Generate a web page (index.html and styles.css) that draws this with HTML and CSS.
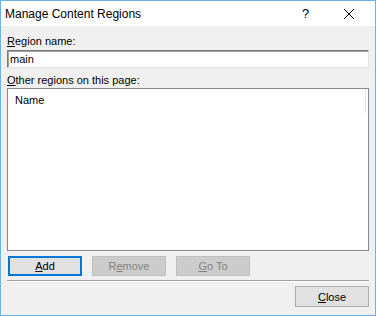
FILE: index.html
```html
<!DOCTYPE html>
<html lang="en">
<head>
    <meta charset="UTF-8">
    <title>Manage Content Regions</title>
    <link rel="stylesheet" href="styles.css">
</head>
<body>
    <div class="window">
        <div class="titlebar">
            <span class="title">Manage Content Regions</span>
            <span class="help">?</span>
            <span class="close-x">
                <svg width="12" height="12" viewBox="0 0 12 12">
                    <path d="M1 1 L11 11 M11 1 L1 11" stroke="#000" stroke-width="1" fill="none"/>
                </svg>
            </span>
        </div>

        <div class="content">
            <label class="field-label" for="region-name"><u>R</u>egion name:</label>
            <input type="text" id="region-name" class="text-input" value="main">

            <div class="field-label list-label"><u>O</u>ther regions on this page:</div>
            <div class="listbox">
                <div class="list-header">
                    <div class="col-name">Name</div>
                </div>
            </div>

            <div class="button-row">
                <button class="btn btn-default"><u>A</u>dd</button>
                <button class="btn" disabled>R<u>e</u>move</button>
                <button class="btn" disabled><u>G</u>o To</button>
            </div>

            <div class="separator"></div>

            <div class="footer">
                <button class="btn btn-close"><u>C</u>lose</button>
            </div>
        </div>
    </div>
</body>
</html>
```

FILE: styles.css
```css
body {
    margin: 0;
    background-color: #f0f0f0;
    font-family: "Liberation Sans", Arial, sans-serif;
    color: #000000;
}

.window {
    width: 376px;
    height: 316px;
    box-sizing: border-box;
    border: 1px solid #6bb3e6;
    background-color: #f0f0f0;
}

.titlebar {
    height: 25px;
    background-color: #ffffff;
    display: flex;
    align-items: center;
    font-size: 12px;
}

.title {
    padding-left: 4px;
    flex: 1;
}

.help {
    width: 12px;
    font-size: 13px;
    margin-right: 29px;
}

.close-x {
    display: flex;
    width: 12px;
    margin-right: 20px;
}

.content {
    padding: 9px 6px 0 6px;
    font-size: 11px;
}

.field-label {
    display: block;
    line-height: 13px;
    height: 13px;
}

.text-input {
    display: block;
    margin-top: 2px;
    width: 362px;
    height: 18px;
    box-sizing: border-box;
    padding: 0 2px;
    border: 1px solid;
    border-color: #7a7a7a #e3e3e3 #e3e3e3 #7a7a7a;
    box-shadow: inset 1px 1px 0 #a0a0a0;
    font-family: inherit;
    font-size: 11px;
    background-color: #ffffff;
    outline: none;
}

.list-label {
    margin-top: 6px;
}

.listbox {
    margin-top: 1px;
    width: 362px;
    height: 163px;
    box-sizing: border-box;
    border: 1px solid #828790;
    background-color: #ffffff;
}

.list-header {
    display: flex;
}

.col-name {
    width: 358px;
    height: 24px;
    box-sizing: border-box;
    padding: 5px 0 0 7px;
    border-right: 1px solid #e5e5e5;
}

.button-row {
    display: flex;
    gap: 10px;
    margin-top: 5px;
    padding-left: 1px;
}

.btn {
    width: 74px;
    height: 20px;
    box-sizing: border-box;
    padding: 0;
    background-color: #e1e1e1;
    border: 1px solid #adadad;
    font-family: inherit;
    font-size: 11px;
    color: #000000;
}

.btn-default {
    border: 2px solid #0078d7;
}

.btn:disabled {
    background-color: #cccccc;
    border-color: #bfbfbf;
    color: #838383;
}

.separator {
    margin-top: 4px;
    width: 362px;
    height: 1px;
    border-top: 1px solid #a0a0a0;
    background-color: #ffffff;
}

.footer {
    display: flex;
    justify-content: flex-end;
    margin-top: 4px;
    width: 362px;
}

.btn-close {
    height: 21px;
}
```
